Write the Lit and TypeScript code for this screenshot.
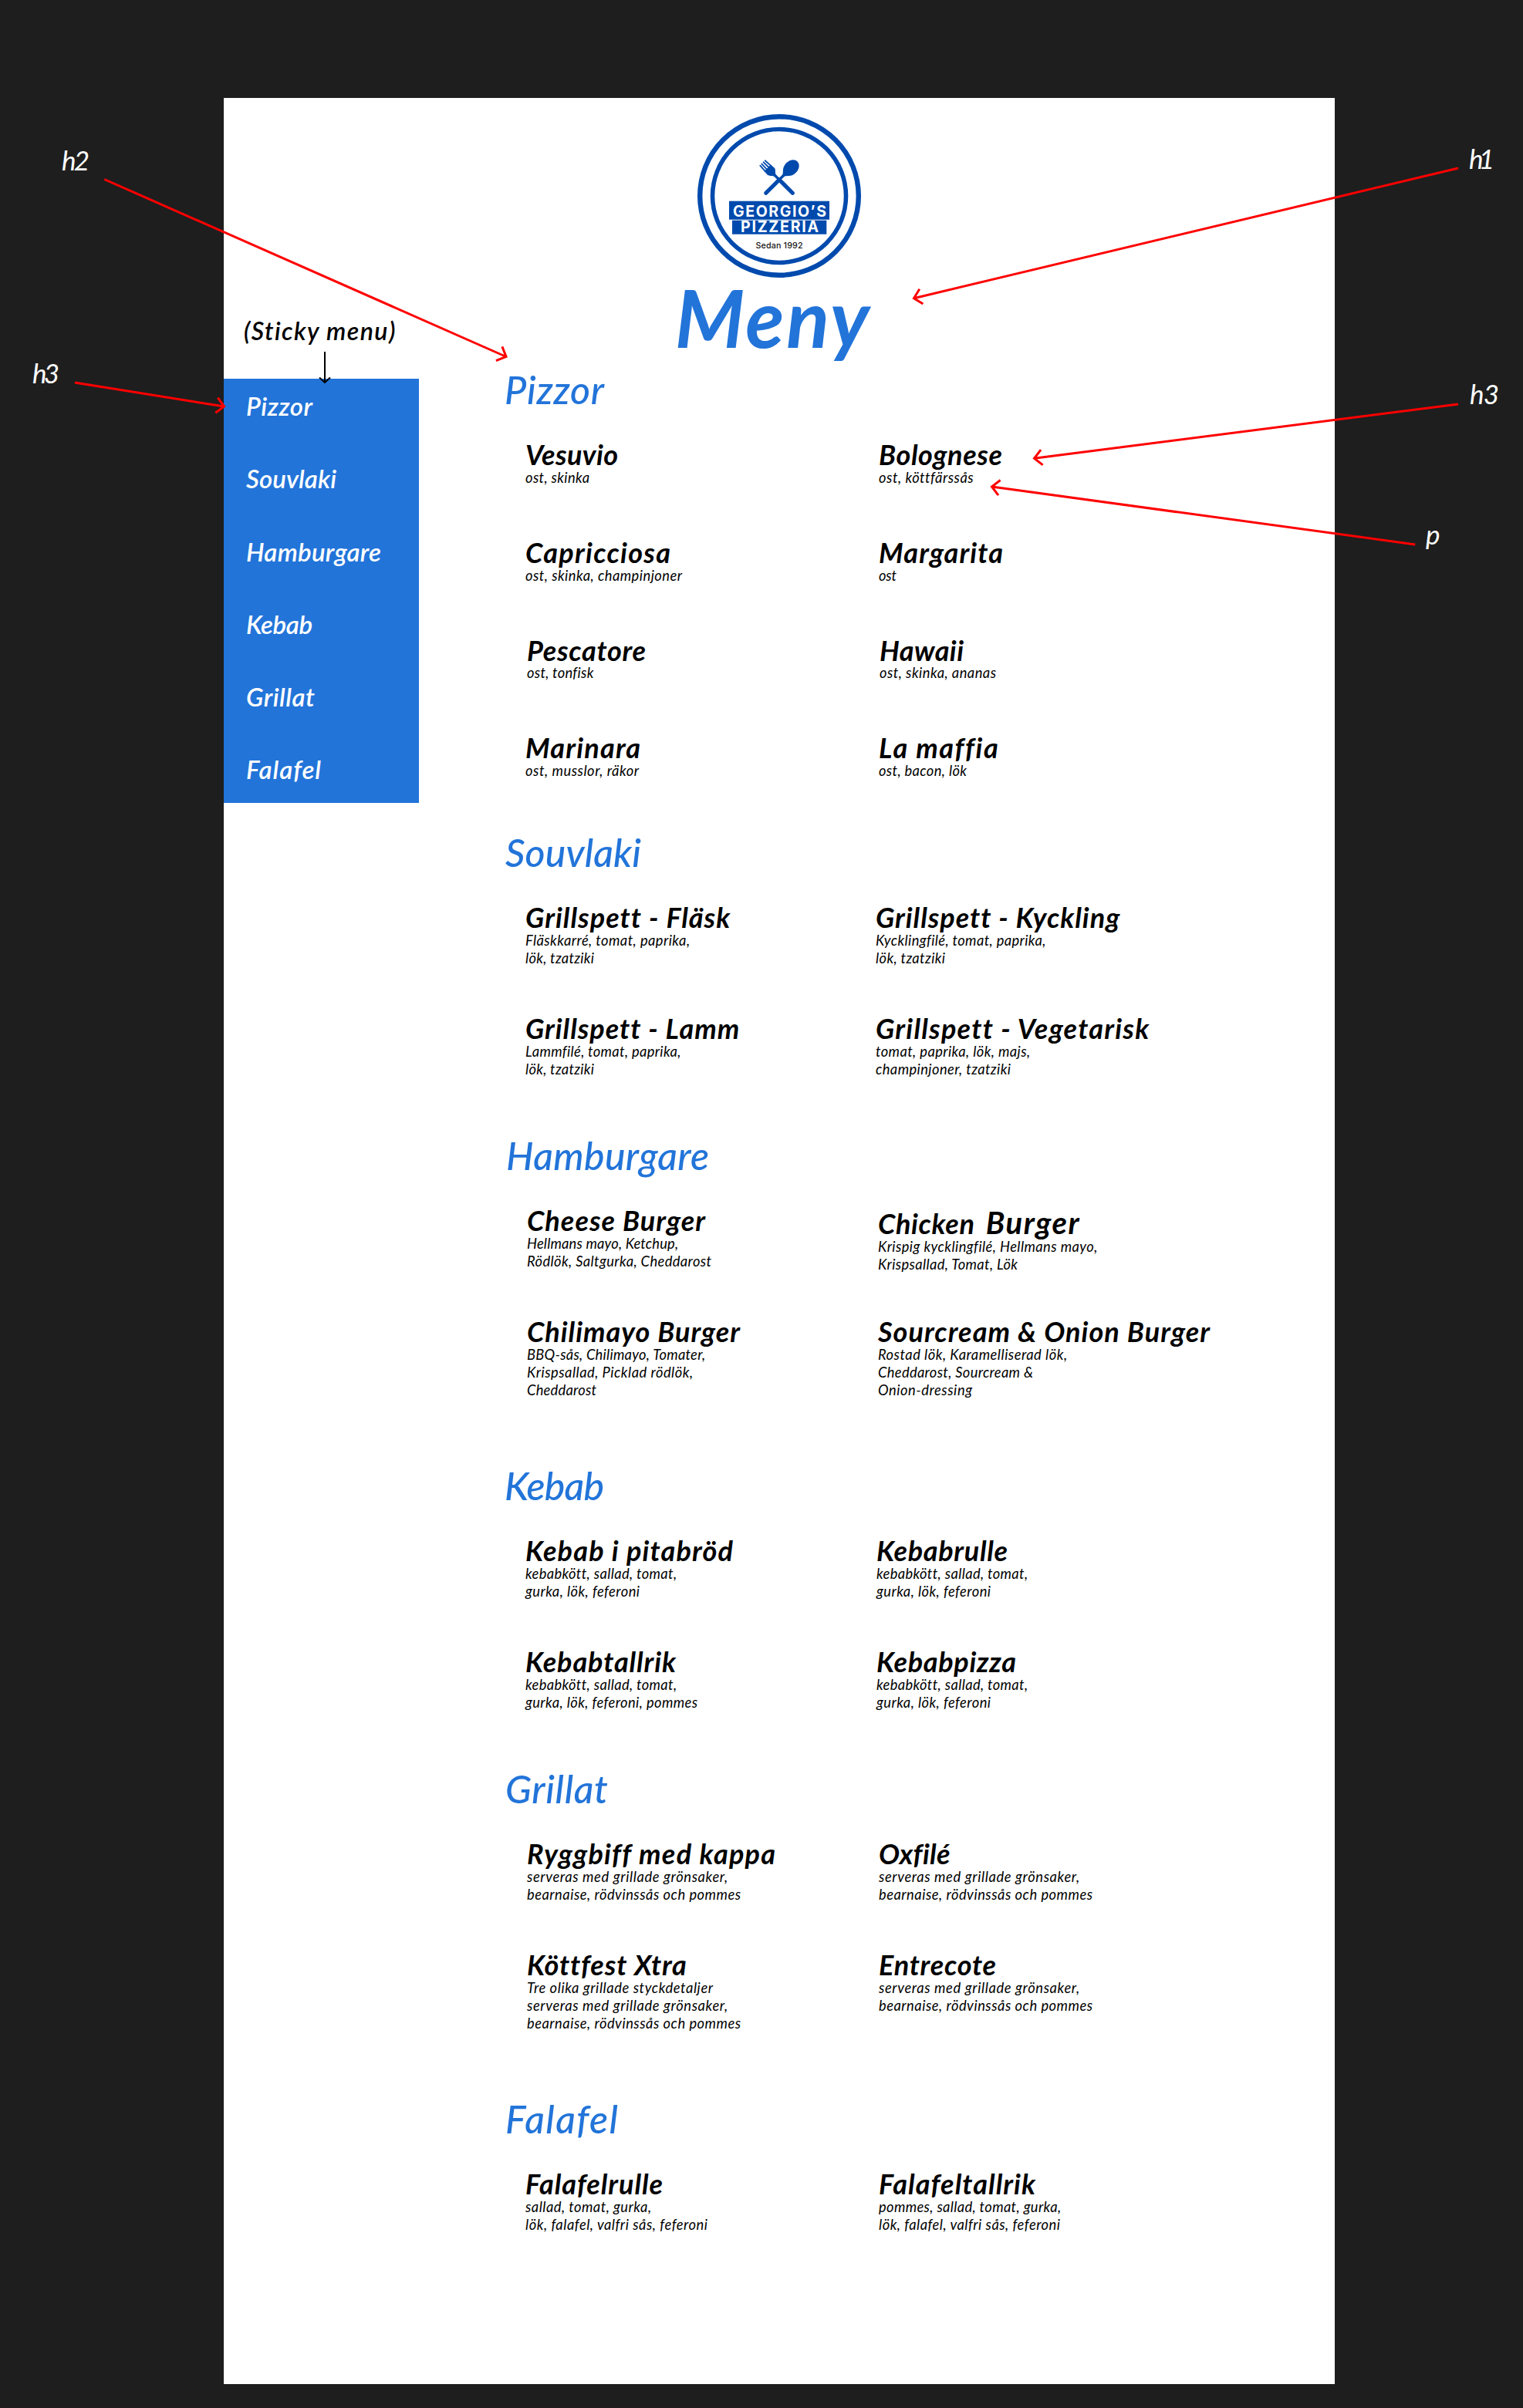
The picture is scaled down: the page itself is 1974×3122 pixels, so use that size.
import { LitElement, html, svg, css } from "lit";
import { customElement, property } from "lit/decorators.js";

/** A single line of text, tracked so that it spans a given width. */
@customElement("fit-line")
class FitLine extends LitElement {
  @property() text = "";
  @property({ type: Number }) span = 0;

  static styles = css`
    :host { display: block; white-space: pre; }
    .line { display: inline-block; }
  `;

  updated() {
    const el = this.renderRoot.querySelector(".line") as HTMLElement;
    el.style.letterSpacing = "0px";
    const natural = el.getBoundingClientRect().width;
    const gaps = Math.max(1, this.text.length - 1);
    el.style.letterSpacing = ((this.span - natural) / gaps).toFixed(3) + "px";
  }

  render() {
    return html`<span class="line">${this.text}</span>`;
  }
}

type Line = [string, number];
interface Dish { dx: number; name: Line; name2?: Line; lines: Line[]; }
interface Section { id: string; dx: number; title: Line; dishes: Dish[]; }

const d = (dx: number, name: Line, ...lines: Line[]): Dish => ({ dx, name, lines });

const NAV: Line[] = [
  ["Pizzor", 86], ["Souvlaki", 117], ["Hamburgare", 175],
  ["Kebab", 86], ["Grillat", 89], ["Falafel", 97],
];

const SECTIONS: Section[] = [
  { id: "pizzor", dx: 0, title: ["Pizzor", 129], dishes: [
    d(0, ["Vesuvio", 120], ["ost, skinka", 83]),
    d(3, ["Bolognese", 160], ["ost, köttfärssås", 121]),
    d(0, ["Capricciosa", 188], ["ost, skinka, champinjoner", 203]),
    d(3, ["Margarita", 161], ["ost", 23]),
    d(2, ["Pescatore", 154], ["ost, tonfisk", 86]),
    d(4, ["Hawaii", 109], ["ost, skinka, ananas", 151]),
    d(0, ["Marinara", 149], ["ost, musslor, räkor", 147]),
    d(3, ["La maffia", 153], ["ost, bacon, lök", 114]),
  ] },
  { id: "souvlaki", dx: 1, title: ["Souvlaki", 176], dishes: [
    d(0, ["Grillspett - Fläsk", 263], ["Fläskkarré, tomat, paprika,", 213], ["lök, tzatziki", 89]),
    d(-1, ["Grillspett - Kyckling", 314], ["Kycklingfilé, tomat, paprika,", 220], ["lök, tzatziki", 90]),
    d(0, ["Grillspett - Lamm", 275], ["Lammfilé, tomat, paprika,", 201], ["lök, tzatziki", 89]),
    d(-1, ["Grillspett - Vegetarisk", 352], ["tomat, paprika, lök, majs,", 200], ["champinjoner, tzatziki", 175]),
  ] },
  { id: "hamburgare", dx: 2, title: ["Hamburgare", 263], dishes: [
    d(2, ["Cheese Burger", 231], ["Hellmans mayo, Ketchup,", 196], ["Rödlök, Saltgurka, Cheddarost", 239]),
    { dx: 2, name: ["Chicken", 125], name2: ["Burger", 121], lines: [
      ["Krispig kycklingfilé, Hellmans mayo,", 284], ["Krispsallad, Tomat, Lök", 181]] },
    d(2, ["Chilimayo Burger", 276], ["BBQ-sås, Chilimayo, Tomater,", 231], ["Krispsallad, Picklad rödlök,", 215], ["Cheddarost", 90]),
    d(2, ["Sourcream & Onion Burger", 430], ["Rostad lök, Karamelliserad lök,", 245], ["Cheddarost, Sourcream &", 201], ["Onion-dressing", 122]),
  ] },
  { id: "kebab", dx: 0, title: ["Kebab", 129], dishes: [
    d(0, ["Kebab i pitabröd", 269], ["kebabkött, sallad, tomat,", 195], ["gurka, lök, feferoni", 148]),
    d(0, ["Kebabrulle", 170], ["kebabkött, sallad, tomat,", 195], ["gurka, lök, feferoni", 148]),
    d(0, ["Kebabtallrik", 195], ["kebabkött, sallad, tomat,", 195], ["gurka, lök, feferoni, pommes", 223]),
    d(0, ["Kebabpizza", 181], ["kebabkött, sallad, tomat,", 195], ["gurka, lök, feferoni", 148]),
  ] },
  { id: "grillat", dx: 1, title: ["Grillat", 133], dishes: [
    d(2, ["Ryggbiff med kappa", 321], ["serveras med grillade grönsaker,", 260], ["bearnaise, rödvinssås och pommes", 277]),
    d(3, ["Oxfilé", 92], ["serveras med grillade grönsaker,", 260], ["bearnaise, rödvinssås och pommes", 277]),
    d(2, ["Köttfest Xtra", 203], ["Tre olika grillade styckdetaljer", 241], ["serveras med grillade grönsaker,", 260], ["bearnaise, rödvinssås och pommes", 277]),
    d(3, ["Entrecote", 152], ["serveras med grillade grönsaker,", 260], ["bearnaise, rödvinssås och pommes", 277]),
  ] },
  { id: "falafel", dx: 1, title: ["Falafel", 146], dishes: [
    d(0, ["Falafelrulle", 178], ["sallad, tomat, gurka,", 163], ["lök, falafel, valfri sås, feferoni", 236]),
    d(3, ["Falafeltallrik", 203], ["pommes, sallad, tomat, gurka,", 236], ["lök, falafel, valfri sås, feferoni", 235]),
  ] },
];

const ARROWS = [
  [135.3, 232.5, 656, 462.5],
  [97, 496, 290.5, 527],
  [1890, 218, 1184.5, 386.7],
  [1890, 524, 1340.5, 594.3],
  [1834.3, 706, 1285.5, 631],
];

const NOTES: [string, number, number, number][] = [
  ["h2", 80, 221, 36], ["h3", 42, 497, 35],
  ["h1", 1904, 219, 33], ["h3", 1905, 524, 38], ["p", 1848, 706, 19],
];

const arrow = ([x1, y1, x2, y2]: number[]) => {
  const a = Math.atan2(y2 - y1, x2 - x1);
  const wing = (s: number) => {
    const t = a + Math.PI + (s * Math.PI) / 4;
    return `${(x2 + 14 * Math.cos(t)).toFixed(1)} ${(y2 + 14 * Math.sin(t)).toFixed(1)}`;
  };
  return svg`<path class="arrow" d="M${x1} ${y1}L${x2} ${y2}M${wing(1)}L${x2} ${y2}L${wing(-1)}" />`;
};

@customElement("app-root")
class AppRoot extends LitElement {
  static styles = css`
    :host {
      display: block;
      position: relative;
      box-sizing: border-box;
      width: 1974px;
      height: 3122px;
      padding: 127px 244px 30px 290px;
      background: #1e1e1e;
      border-bottom: 1px solid #221a22;
      overflow: hidden;
      font-family: Lato, "Open Sans", sans-serif;
      font-style: italic;
      color: #000;
    }
    h1, h2, h3, p { margin: 0; font-weight: inherit; font-size: inherit; }
    .page {
      display: grid;
      grid-template: 347px 1fr / 253px 1fr;
      height: 2964px;
      background: #fff;
    }
    .head {
      grid-area: 1 / 1 / 2 / 3;
      display: flex;
      flex-direction: column;
      align-items: center;
      padding-top: 21px;
    }
    .logo { display: block; width: 212px; height: 212px; }
    .brand { fill: #004aad; }
    .ring { fill: none; stroke: #004aad; }
    .tines { fill: none; stroke: #004aad; stroke-width: 1.8; stroke-linecap: round; }
    .sign { font: 700 19.5px Inter, sans-serif; fill: #fff; }
    .since { font: 500 10.7px Inter, sans-serif; fill: #111; }
    .title {
      padding-right: 16px;
      font-size: 103px;
      line-height: 102px;
      font-weight: 700;
      color: #2274d9;
    }
    .sticky-label {
      grid-area: 1 / 1;
      align-self: end;
      padding: 0 0 25px 26px;
      font-size: 32px;
      line-height: 40px;
      font-weight: 600;
    }
    .nav {
      box-sizing: border-box;
      height: 550px;
      margin-top: 17px;
      padding: 15.4px 0 0 29px;
      display: flex;
      flex-direction: column;
      gap: 54.1px;
      background: #2274d9;
      color: #fff;
      font-size: 33px;
      line-height: 40px;
      font-weight: 600;
    }
    .menu { padding-left: 111px; }
    .section.pizzor { height: 600.2px; }
    .section.souvlaki { height: 393px; }
    .section.hamburgare { height: 428.3px; }
    .section.kebab { height: 392.7px; }
    .section.grillat { height: 428px; }
    .heading {
      font-size: 50px;
      line-height: 62px;
      font-weight: 500;
      color: #2274d9;
      padding-bottom: 32.8px;
    }
    .dishes {
      display: grid;
      grid-template-columns: 455px 1fr;
      grid-auto-rows: 144px;
      padding-left: 27px;
    }
    .pizzor .dishes { grid-auto-rows: 126.9px; }
    .name {
      display: flex;
      align-items: baseline;
      gap: 14px;
      font-size: 36px;
      line-height: 40px;
      font-weight: 700;
      margin-bottom: -1.2px;
    }
    .mixed { padding-top: 3.5px; }
    .larger { font-size: 40px; }
    .desc { font-size: 18.3px; line-height: 23px; }
    .overlay { position: absolute; inset: 0; width: 1974px; height: 3122px; }
    .arrow { fill: none; stroke: #f00; stroke-width: 3; }
    .thin { fill: none; stroke: #000; stroke-width: 2; }
    .note { font-size: 35px; fill: #fff; }
  `;

  logo() {
    return html`<svg class="logo" viewBox="904 148.3 212 212">
      <circle class="ring" cx="1010" cy="254.3" r="102.8" stroke-width="6.4" />
      <circle class="ring" cx="1010" cy="254.3" r="86.5" stroke-width="5.6" />
      <g transform="translate(1010 233.3) rotate(-45)">
        <rect class="brand" x="-2.6" y="-3" width="5.2" height="30" rx="2.6" />
        <path class="brand" d="M-1.6 0 L-1.8 -7.5 C-2 -11 -6.4 -11.5 -6.4 -15.5 L-6 -21.5 L6 -21.5 L6.4 -15.5 C6.4 -11.5 2 -11 1.8 -7.5 L1.6 0 Z" />
        <path class="tines" d="M-5.2 -20.5L-4.5 -30.5M-1.8 -20.5L-1.6 -30.5M1.8 -20.5L1.6 -30.5M5.2 -20.5L4.5 -30.5" />
      </g>
      <g transform="translate(1010 233.3) rotate(45)">
        <rect class="brand" x="-2.6" y="-3" width="5.2" height="30" rx="2.6" />
        <path class="brand" d="M-1.6 0 L-1.8 -7.5 C-2.2 -11 -8.8 -12.5 -8.8 -21.5 C-8.8 -28.5 -4.8 -33.3 0 -33.3 C4.8 -33.3 8.8 -28.5 8.8 -21.5 C8.8 -12.5 2.2 -11 1.8 -7.5 L1.6 0 Z" />
      </g>
      <rect class="brand" x="945" y="261" width="130" height="24" />
      <rect class="brand" x="949" y="286" width="122.3" height="18" />
      <text class="sign" x="950" y="281.6" textLength="121">GEORGIO’S</text>
      <text class="sign" x="960" y="301.7" textLength="101">PIZZERIA</text>
      <text class="since" x="979.5" y="322.7" textLength="61">Sedan 1992</text>
    </svg>`;
  }

  dish(x: Dish) {
    return html`<div class=${x.name2 ? "dish mixed" : "dish"} style="margin-left:${x.dx}px">
      <h3 class="name">
        <fit-line .text=${x.name[0]} .span=${x.name[1]}></fit-line>
        ${x.name2 ? html`<fit-line class="larger" .text=${x.name2[0]} .span=${x.name2[1]}></fit-line>` : ""}
      </h3>
      <p class="desc">${x.lines.map((l) => html`<fit-line .text=${l[0]} .span=${l[1]}></fit-line>`)}</p>
    </div>`;
  }

  render() {
    return html`
      <main class="page">
        <header class="head">
          ${this.logo()}
          <h1 class="title"><fit-line text="Meny" span="252"></fit-line></h1>
        </header>
        <div class="sticky-label"><fit-line text="(Sticky menu)" span="196"></fit-line></div>
        <nav class="nav">
          ${NAV.map((n) => html`<h3><fit-line .text=${n[0]} .span=${n[1]}></fit-line></h3>`)}
        </nav>
        <div class="menu">
          ${SECTIONS.map((s) => html`<section class="section ${s.id}">
            <h2 class="heading" style="margin-left:${s.dx}px"><fit-line .text=${s.title[0]} .span=${s.title[1]}></fit-line></h2>
            <div class="dishes">${s.dishes.map((x) => this.dish(x))}</div>
          </section>`)}
        </div>
      </main>
      <svg class="overlay" viewBox="0 0 1974 3122">
        ${ARROWS.map(arrow)}
        <path class="thin" d="M421 456V496M414 489.5L421 496L428 489.5" />
        ${NOTES.map((n) => svg`<text class="note" x=${n[1]} y=${n[2]} textLength=${n[3]}>${n[0]}</text>`)}
      </svg>
    `;
  }
}
